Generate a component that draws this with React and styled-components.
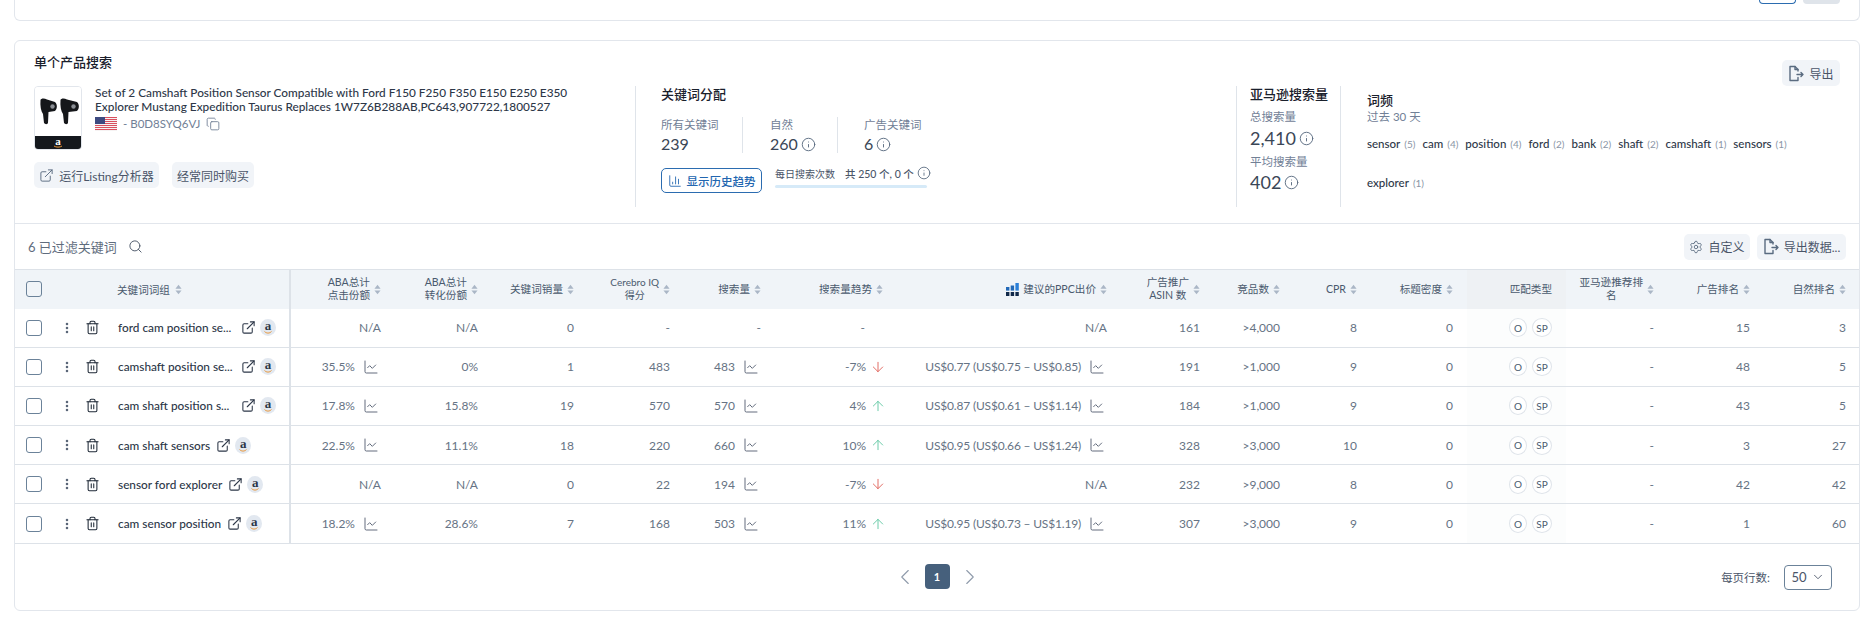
import React from 'react'
import styled, { createGlobalStyle } from 'styled-components'
import { Search, Settings, Trash2, EllipsisVertical, Copy, ChevronLeft, ChevronRight, ChevronDown, ArrowUp, ArrowDown, Info, ChartLine, ChartColumn, ExternalLink } from 'lucide-react'

const FONT = `Lato, "Noto Sans CJK SC", sans-serif`
const COLUMNS = '276px 104px 97px 96px 96px 91px 122px 224px 93px 80px 77px 96px 99px 102px 96px 96px'

const GlobalStyle = createGlobalStyle`
  html, body { margin: 0; padding: 0; background: #fff; }
  body { font-family: ${FONT}; color: #2d3748; overflow: hidden; }
  * { box-sizing: border-box; }
`

const Page = styled.div`
  width: 1869px;
  height: 641px;
  padding: 0 9px 0 14px;
  background: #fff;
`

const TopCard = styled.div`
  height: 21px;
  border: 1px solid #e2e6ec;
  border-top: 0;
  border-radius: 0 0 6px 6px;
  display: flex;
  justify-content: flex-end;
  gap: 7px;
  padding-right: 19px;
`

const TopButton = styled.div`
  width: 37px;
  height: 4px;
  border-radius: 0 0 5px 5px;
  background: ${p => (p.$primary ? '#fff' : '#dfe4ea')};
  border: ${p => (p.$primary ? '1px solid #2b6cb0' : '0')};
  border-top: 0;
`

const Card = styled.div`
  margin-top: 19px;
  height: 571px;
  border: 1px solid #e2e6ec;
  border-radius: 6px;
`

const Summary = styled.div`
  position: relative;
  height: 183px;
  padding: 11px 19px 0;
  border-bottom: 1px solid #e2e6ec;
`

const CardTitle = styled.div`
  font-size: 13px;
  line-height: 20px;
  font-weight: 500;
  color: #1a202c;
`

const SummaryGrid = styled.div`
  display: flex;
  margin-top: 14px;
  height: 121px;
`

const ProductPane = styled.div`
  width: 602px;
  border-right: 1px solid #dfe4ea;
`

const ProductRow = styled.div`
  display: flex;
  gap: 13px;
`

const ProductThumb = styled.div`
  width: 48px;
  height: 64px;
  border: 1px solid #e2e6ec;
  border-radius: 4px;
  overflow: hidden;
  flex: none;
`

const ProductName = styled.div`
  font-size: 11.8px;
  line-height: 14px;
  font-weight: 500;
  color: #2d3748;
  width: 500px;
`

const AsinRow = styled.div`
  display: flex;
  align-items: center;
  margin-top: 3px;
  font-size: 11.5px;
  line-height: 14px;
  color: #718096;
  gap: 6px;
`

const PaneActions = styled.div`
  display: flex;
  gap: 13px;
  margin-top: 12px;
`

const SoftButton = styled.div`
  display: inline-flex;
  align-items: center;
  justify-content: center;
  gap: 5px;
  height: ${p => p.$height || 26}px;
  width: ${p => p.$width}px;
  background: #f1f4f8;
  border-radius: 5px;
  font-size: 12px;
  color: #4a5568;
  white-space: nowrap;
  svg { color: #5a6b80; flex: none; }
`

const ExportButton = styled(SoftButton)`
  position: absolute;
  top: 19px;
  right: 19px;
`

const KeywordPane = styled.div`
  width: 601px;
  padding-left: 25px;
  border-right: 1px solid #dfe4ea;
`

const PaneTitle = styled.div`
  font-size: 13px;
  line-height: 18px;
  font-weight: 500;
  color: #1a202c;
  margin-top: -1px;
`

const StatRow = styled.div`
  display: flex;
  margin-top: 14px;
`

const Stat = styled.div`
  width: ${p => p.$width}px;
  height: 36px;
  border-right: ${p => (p.$divider ? '1px solid #dfe4ea' : '0')};
  margin-right: ${p => p.$gap || 0}px;
`

const StatLabel = styled.div`
  font-size: 11.5px;
  line-height: 16px;
  color: #718096;
`

const StatValue = styled.div`
  display: flex;
  align-items: center;
  gap: 3px;
  margin-top: ${p => p.$top || 0}px;
  font-size: ${p => p.$size || 16}px;
  line-height: ${p => p.$line || 20}px;
  color: #3a4656;
  svg { color: #5a6b80; }
`

const TrendRow = styled.div`
  display: flex;
  gap: 13px;
  margin-top: 15px;
`

const OutlineButton = styled.div`
  display: flex;
  align-items: center;
  justify-content: center;
  gap: 5px;
  width: 101px;
  height: 25px;
  border: 1px solid #2b6cb0;
  border-radius: 5px;
  color: #2266b0;
  font-size: 11.5px;
  font-weight: 500;
`

const UsageBox = styled.div`
  width: 152px;
`

const UsageText = styled.div`
  display: flex;
  align-items: center;
  gap: 10px;
  height: 14px;
  font-size: 10px;
  color: #4a5568;
  white-space: nowrap;
  margin-top: -2px;
  b { font-weight: 500; display: flex; align-items: center; gap: 3px; font-size: 10.5px; }
  svg { color: #5a6b80; }
`

const UsageBar = styled.div`
  height: 3px;
  margin-top: 5px;
  background: #d6eaf8;
  border-radius: 2px;
`

const VolumePane = styled.div`
  width: 104px;
  padding-left: 13px;
  border-right: 1px solid #dfe4ea;
`

const VolumeLabel = styled(StatLabel)`
  margin-top: ${p => p.$top}px;
`

const FrequencyPane = styled.div`
  flex: 1;
  padding: 6px 0 0 26px;
`

const MutedLine = styled.div`
  font-size: 11.5px;
  line-height: 16px;
  color: #718096;
`

const WordCloud = styled.div`
  display: flex;
  flex-wrap: wrap;
  width: 430px;
  row-gap: 25px;
  column-gap: 7px;
  margin-top: 12px;
  line-height: 13px;
`

const Word = styled.span`
  font-size: 11.5px;
  font-weight: 500;
  color: #2d3748;
  white-space: nowrap;
  small { font-size: 10px; font-weight: 400; color: #8a96a6; margin-left: 4px; }
`

const Toolbar = styled.div`
  display: flex;
  align-items: center;
  justify-content: space-between;
  height: 45px;
  padding: 0 13px 0 13px;
`

const FilterLabel = styled.div`
  display: flex;
  align-items: center;
  gap: 11px;
  font-size: 13px;
  color: #5f6c7d;
  svg { color: #4a5568; }
`

const ToolActions = styled.div`
  display: flex;
  gap: 7px;
`

const Row = styled.div`
  display: grid;
  grid-template-columns: ${COLUMNS};
  height: ${p => p.$height || 39.2}px;
  border-bottom: 1px solid #dde2e8;
`

const HeaderRow = styled(Row)`
  height: 39.5px;
  background: #f0f4f8;
  border-top: 1px solid #dde2e8;
  border-bottom: 0;
`

const Cell = styled.div`
  display: flex;
  align-items: center;
  justify-content: flex-end;
  gap: 6px;
  padding-right: 14px;
  font-size: 12px;
  color: #667384;
  white-space: nowrap;
  background: ${p => (p.$tint ? '#fcfdfd' : 'transparent')};
`

const FixedCell = styled.div`
  display: flex;
  align-items: center;
  padding-left: 11px;
  border-right: 2px solid #dde2e8;
  svg { flex: none; }
`

const HeadCell = styled(Cell)`
  font-size: 10.6px;
  line-height: 13px;
  color: #4a5a6e;
  white-space: normal;
  text-align: center;
  gap: 4px;
  background: ${p => (p.$tint ? '#eef1f4' : 'transparent')};
`

const HeadText = styled.div`
  max-width: ${p => p.$max || 90}px;
  font-size: ${p => p.$size || 10.6}px;
`

const FixedHead = styled(FixedCell)`
  font-size: 10.6px;
  color: #4a5a6e;
  gap: 5px;
`

const CheckBox = styled.div`
  width: 16px;
  height: 16px;
  border: 1px solid #6b8299;
  border-radius: 3px;
  flex: none;
  margin-right: ${p => p.$right}px;
`

const RowIcons = styled.div`
  display: flex;
  align-items: center;
  flex: none;
  color: #1f2937;
  width: 58px;
  gap: 11px;
`

const KeywordName = styled.div`
  flex: none;
  width: ${p => (p.$cut ? '117px' : 'auto')};
  font-size: 11.8px;
  font-weight: 500;
  color: #2d3748;
  white-space: nowrap;
  margin-right: 6px;
`

const LinkIcon = styled(ExternalLink)`
  color: #2d3748;
  margin-right: 4px;
`

const AmazonDot = styled.div`
  position: relative;
  display: flex;
  justify-content: center;
  flex: none;
  width: 16px;
  height: 17px;
  border-radius: 50%;
  background: #e2e8f0;
  color: #2d3748;
  font-family: "Liberation Serif", serif;
  font-weight: 700;
  font-size: 13px;
  line-height: 13px;
  svg { position: absolute; left: 4px; bottom: 2px; }
`

const Badge = styled.div`
  display: flex;
  align-items: center;
  justify-content: center;
  width: ${p => p.$width}px;
  height: 19px;
  border: 1px solid #dfe4ea;
  border-radius: 50%;
  font-size: 10px;
  color: #4a5a6e;
  background: #fff;
`

const Badges = styled.div`
  display: flex;
  gap: 5px;
`

const PpcText = styled.span`
  letter-spacing: -0.18px;
`

const TrendLine = styled(ChartLine)`
  color: #4a5568;
  flex: none;
  margin: 0 2px 0 2px;
`

const DashSlot = styled.span`
  margin-right: 18px;
`

const TrendIcon = styled.span`
  display: flex;
  margin: 0 -3px 0 -2px;
`

const Footer = styled.div`
  position: relative;
  display: flex;
  justify-content: center;
  align-items: center;
  gap: 7px;
  height: 66px;
`

const PageChevron = styled.div`
  color: #8f9bab;
  display: flex;
`

const PageButton = styled.div`
  width: 25px;
  height: 25px;
  border-radius: 4px;
  background: #46607c;
  color: #fff;
  font-size: 11px;
  font-weight: 700;
  display: flex;
  align-items: center;
  justify-content: center;
`

const RowsPerPage = styled.div`
  position: absolute;
  right: 27px;
  top: 21px;
  display: flex;
  align-items: center;
  gap: 14px;
  font-size: 11.5px;
  color: #4a5568;
`

const RowsSelect = styled.div`
  display: flex;
  align-items: center;
  justify-content: center;
  gap: 4px;
  width: 48px;
  height: 25px;
  border: 1px solid #6b8299;
  border-radius: 4px;
  font-size: 13px;
  color: #4a5568;
`

const SortIcon = () => (
  <svg width="7" height="11" viewBox="0 0 8 11" fill="#aab6c6" style={{ flex: 'none' }}>
    <path d="M4 0 L7.5 4.5 H0.5 Z" />
    <path d="M4 11 L7.5 6.5 H0.5 Z" />
  </svg>
)

const Smile = ({ width = 8 }) => (
  <svg width={width} height="3" viewBox="0 0 8 3" fill="none">
    <path d="M0.5 0.5 C2.5 2.6 5.5 2.6 7.5 0.5" stroke="#e8973a" strokeWidth="1" />
  </svg>
)

const ExportIcon = () => (
  <svg width="16" height="17" viewBox="0 0 16 17" fill="none" stroke="currentColor" strokeWidth="1.4" strokeLinejoin="round" strokeLinecap="round">
    <path d="M10 6 V4.5 L7 1.5 H2 V15.5 H10 V12.5" />
    <path d="M7 1.5 V4.5 H10" />
    <path d="M9 9.5 H15 M13 7.5 L15 9.5 L13 11.5" />
  </svg>
)

const PpcIcon = () => (
  <svg width="13" height="13" viewBox="0 0 13 13" style={{ flex: 'none' }}>
    <rect x="0" y="4" width="3.4" height="3.6" fill="#2269b8" />
    <rect x="4.7" y="2.5" width="3.4" height="5.1" fill="#2269b8" />
    <rect x="9.4" y="0" width="3.4" height="7.6" fill="#2b7fd8" />
    <rect x="0" y="9" width="3.4" height="4" fill="#12294a" />
    <rect x="4.7" y="9" width="3.4" height="4" fill="#12294a" />
    <rect x="9.4" y="9" width="3.4" height="4" fill="#12294a" />
  </svg>
)

const ProductPicture = () => (
  <svg width="46" height="62" viewBox="0 0 46 62">
    <rect width="46" height="62" fill="#fff" />
    <g fill="#15171a">
      <path d="M5.5 13 C6 11.5 9 11 12 12.5 L20 15 C22.5 17 22.5 22 20 24 L13.5 25 L13 36 C12.5 37.5 10 37.5 9 36 L8 27 C6 24 5 19 5.5 13 Z" />
      <path d="M25.5 13 C26 11.5 29 11 32 12.5 L42 15 C44.5 17 44.5 22 42 24 L33.5 25 L33 36 C32.5 37.5 30 37.5 29 36 L28 27 C26 24 25 19 25.5 13 Z" />
    </g>
    <circle cx="17.5" cy="19.5" r="2.2" fill="#8a8e94" />
    <circle cx="38.5" cy="19.5" r="2.2" fill="#8a8e94" />
    <rect y="49" width="46" height="13" fill="#14181d" />
    <text x="23" y="58" textAnchor="middle" fontFamily="Liberation Serif, serif" fontWeight="700" fontSize="11" fill="#fff">a</text>
    <path d="M19 59 C21 60.5 25 60.5 27 59" stroke="#e8973a" strokeWidth="1" fill="none" />
  </svg>
)

const UsFlag = () => (
  <svg width="22" height="14" viewBox="0 0 22 14">
    {[0, 2, 4, 6, 8, 10, 12].map(y => <rect key={y} y={y} width="22" height="1" fill="#d9505f" />)}
    {[1, 3, 5, 7, 9, 11, 13].map(y => <rect key={y} y={y} width="22" height="1" fill="#f6f3f3" />)}
    <rect width="10" height="7" fill="#3d4a80" />
  </svg>
)

const headers = [
  { lines: ['ABA总计', '点击份额'] },
  { lines: ['ABA总计', '转化份额'] },
  { lines: ['关键词销量'] },
  { lines: ['Cerebro IQ', '得分'], size: 10 },
  { lines: ['搜索量'] },
  { lines: ['搜索量趋势'] },
  { lines: ['建议的PPC出价'], ppc: true },
  { lines: ['广告推广', 'ASIN 数'] },
  { lines: ['竞品数'] },
  { lines: ['CPR'] },
  { lines: ['标题密度'] },
  { lines: ['匹配类型'], tint: true, noSort: true },
  { lines: ['亚马逊推荐排', '名'] },
  { lines: ['广告排名'] },
  { lines: ['自然排名'] },
]

const words = [
  ['sensor', 5], ['cam', 4], ['position', 4], ['ford', 2], ['bank', 2],
  ['shaft', 2], ['camshaft', 1], ['sensors', 1], ['explorer', 1],
]

const rows = [
  { name: 'ford cam position se...', cut: true, click: null, conv: 'N/A', sales: 0, iq: '-', volume: '-', trend: null, ppc: null, asin: 161, comp: '>4,000', cpr: 8, ad: 15, org: 3 },
  { name: 'camshaft position se...', cut: true, click: '35.5%', conv: '0%', sales: 1, iq: 483, volume: 483, trend: -7, ppc: ['US$0.77', '(US$0.75 – US$0.85)'], asin: 191, comp: '>1,000', cpr: 9, ad: 48, org: 5 },
  { name: 'cam shaft position s...', cut: true, click: '17.8%', conv: '15.8%', sales: 19, iq: 570, volume: 570, trend: 4, ppc: ['US$0.87', '(US$0.61 – US$1.14)'], asin: 184, comp: '>1,000', cpr: 9, ad: 43, org: 5 },
  { name: 'cam shaft sensors', click: '22.5%', conv: '11.1%', sales: 18, iq: 220, volume: 660, trend: 10, ppc: ['US$0.95', '(US$0.66 – US$1.24)'], asin: 328, comp: '>3,000', cpr: 10, ad: 3, org: 27 },
  { name: 'sensor ford explorer', click: null, conv: 'N/A', sales: 0, iq: 22, volume: 194, trend: -7, ppc: null, asin: 232, comp: '>9,000', cpr: 8, ad: 42, org: 42 },
  { name: 'cam sensor position', click: '18.2%', conv: '28.6%', sales: 7, iq: 168, volume: 503, trend: 11, ppc: ['US$0.95', '(US$0.73 – US$1.19)'], asin: 307, comp: '>3,000', cpr: 9, ad: 1, org: 60 },
]

const TrendArrow = ({ value }) => (
  <TrendIcon>
    {value < 0
      ? <ArrowDown size={16} color="#e0635a" strokeWidth={1.4} />
      : <ArrowUp size={16} color="#62c8a4" strokeWidth={1.4} />}
  </TrendIcon>
)

const App = () => (
  <Page>
    <GlobalStyle />
    <TopCard>
      <TopButton $primary />
      <TopButton />
    </TopCard>
    <Card>
      <Summary>
        <CardTitle>单个产品搜索</CardTitle>
        <ExportButton $width={58}><ExportIcon />导出</ExportButton>
        <SummaryGrid>
          <ProductPane>
            <ProductRow>
              <ProductThumb><ProductPicture /></ProductThumb>
              <div>
                <ProductName>Set of 2 Camshaft Position Sensor Compatible with Ford F150 F250 F350 E150 E250 E350 Explorer Mustang Expedition Taurus Replaces 1W7Z6B288AB,PC643,907722,1800527</ProductName>
                <AsinRow><UsFlag /> - B0D8SYQ6VJ <Copy size={14} strokeWidth={1.5} /></AsinRow>
              </div>
            </ProductRow>
            <PaneActions>
              <SoftButton $width={125}><ExternalLink size={15} strokeWidth={1.5} />运行Listing分析器</SoftButton>
              <SoftButton $width={82}>经常同时购买</SoftButton>
            </PaneActions>
          </ProductPane>
          <KeywordPane>
            <PaneTitle>关键词分配</PaneTitle>
            <StatRow>
              <Stat $width={82} $divider $gap={27}>
                <StatLabel>所有关键词</StatLabel>
                <StatValue $top={1}>239</StatValue>
              </Stat>
              <Stat $width={68} $divider $gap={26}>
                <StatLabel>自然</StatLabel>
                <StatValue $top={1}>260<Info size={15} strokeWidth={1.5} /></StatValue>
              </Stat>
              <Stat $width={80}>
                <StatLabel>广告关键词</StatLabel>
                <StatValue $top={1}>6<Info size={15} strokeWidth={1.5} /></StatValue>
              </Stat>
            </StatRow>
            <TrendRow>
              <OutlineButton><ChartColumn size={14} strokeWidth={1.5} />显示历史趋势</OutlineButton>
              <UsageBox>
                <UsageText>每日搜索次数<b>共 250 个, 0 个<Info size={14} strokeWidth={1.5} /></b></UsageText>
                <UsageBar />
              </UsageBox>
            </TrendRow>
          </KeywordPane>
          <VolumePane>
            <PaneTitle>亚马逊搜索量</PaneTitle>
            <VolumeLabel $top={6}>总搜索量</VolumeLabel>
            <StatValue $size={18} $line={24} $top={1}>2,410<Info size={15} strokeWidth={1.5} /></StatValue>
            <VolumeLabel $top={4}>平均搜索量</VolumeLabel>
            <StatValue $size={18} $line={24}>402<Info size={15} strokeWidth={1.5} /></StatValue>
          </VolumePane>
          <FrequencyPane>
            <PaneTitle>词频</PaneTitle>
            <MutedLine>过去 30 天</MutedLine>
            <WordCloud>
              {words.map(([word, count]) => <Word key={word}>{word}<small>({count})</small></Word>)}
            </WordCloud>
          </FrequencyPane>
        </SummaryGrid>
      </Summary>
      <Toolbar>
        <FilterLabel>6 已过滤关键词<Search size={15} strokeWidth={1.5} /></FilterLabel>
        <ToolActions>
          <SoftButton $width={66}><Settings size={14} strokeWidth={1.5} />自定义</SoftButton>
          <SoftButton $width={89}><ExportIcon />导出数据...</SoftButton>
        </ToolActions>
      </Toolbar>
      <HeaderRow>
        <FixedHead>
          <CheckBox $right={70} />
          关键词词组<SortIcon />
        </FixedHead>
        {headers.map(h => (
          <HeadCell key={h.lines[0] + h.lines.length} $tint={h.tint}>
            {h.ppc && <PpcIcon />}
            <HeadText $max={h.ppc ? 120 : 90} $size={h.size}>{h.lines.map(line => <div key={line}>{line}</div>)}</HeadText>
            {!h.noSort && <SortIcon />}
          </HeadCell>
        ))}
      </HeaderRow>
      {rows.map(r => (
        <Row key={r.name}>
          <FixedCell>
            <CheckBox $right={18} />
            <RowIcons>
              <EllipsisVertical size={14} strokeWidth={2.4} color="#5a6678" />
              <Trash2 size={15} strokeWidth={1.7} />
            </RowIcons>
            <KeywordName $cut={r.cut}>{r.name}</KeywordName>
            <LinkIcon size={15} strokeWidth={1.7} />
            <AmazonDot>a<Smile /></AmazonDot>
          </FixedCell>
          <Cell>{r.click ? <>{r.click}<TrendLine size={16} strokeWidth={1.3} /></> : 'N/A'}</Cell>
          <Cell>{r.conv}</Cell>
          <Cell>{r.sales}</Cell>
          <Cell>{r.iq}</Cell>
          <Cell>{r.volume}{r.volume !== '-' && <TrendLine size={16} strokeWidth={1.3} />}</Cell>
          <Cell>{r.trend === null ? <DashSlot>-</DashSlot> : <>{r.trend}%<TrendArrow value={r.trend} /></>}</Cell>
          <Cell>{r.ppc ? <><PpcText>{r.ppc[0]} {r.ppc[1]}</PpcText><TrendLine size={16} strokeWidth={1.3} /></> : 'N/A'}</Cell>
          <Cell>{r.asin}</Cell>
          <Cell>{r.comp}</Cell>
          <Cell>{r.cpr}</Cell>
          <Cell>0</Cell>
          <Cell $tint><Badges><Badge $width={18}>O</Badge><Badge $width={20}>SP</Badge></Badges></Cell>
          <Cell>-</Cell>
          <Cell>{r.ad}</Cell>
          <Cell>{r.org}</Cell>
        </Row>
      ))}
      <Footer>
        <PageChevron><ChevronLeft size={26} strokeWidth={1} /></PageChevron>
        <PageButton>1</PageButton>
        <PageChevron><ChevronRight size={26} strokeWidth={1} /></PageChevron>
        <RowsPerPage>每页行数:<RowsSelect>50<ChevronDown size={14} strokeWidth={1.5} /></RowsSelect></RowsPerPage>
      </Footer>
    </Card>
  </Page>
)

export default App
